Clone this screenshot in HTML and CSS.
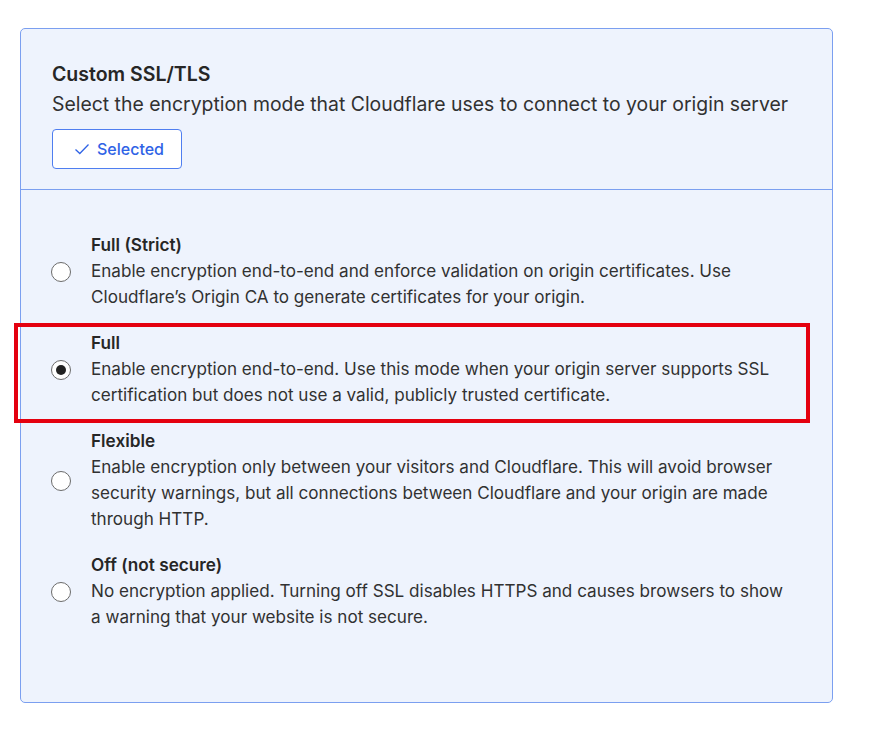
FILE: index.html
```html
<!DOCTYPE html>
<html>
<head>
<meta charset="utf-8">
<link rel="stylesheet" href="styles.css">
</head>
<body>
<div class="card">
  <div class="card-head">
    <h2 class="title">Custom SSL/TLS</h2>
    <p class="subtitle">Select the encryption mode that Cloudflare uses to connect to your origin server</p>
    <button class="btn">
      <svg width="16" height="16" viewBox="0 0 16 16" class="check"><path d="M1.5 8.5 L5.8 12.5 L14.5 3.5" fill="none" stroke="currentColor" stroke-width="1.3"/></svg>
      <span>Selected</span>
    </button>
  </div>
  <div class="options">
    <div class="option">
      <span class="radio"></span>
      <div class="text">
        <div class="opt-title">Full (Strict)</div>
        <div class="opt-desc">Enable encryption end-to-end and enforce validation on origin certificates. Use Cloudflare’s Origin CA to generate certificates for your origin.</div>
      </div>
    </div>
    <div class="option">
      <span class="radio checked"></span>
      <div class="text">
        <div class="opt-title">Full</div>
        <div class="opt-desc">Enable encryption end-to-end. Use this mode when your origin server supports SSL certification but does not use a valid, publicly trusted certificate.</div>
      </div>
      <div class="highlight"></div>
    </div>
    <div class="option">
      <span class="radio"></span>
      <div class="text">
        <div class="opt-title">Flexible</div>
        <div class="opt-desc">Enable encryption only between your visitors and Cloudflare. This will avoid browser security warnings, but all connections between Cloudflare and your origin are made through HTTP.</div>
      </div>
    </div>
    <div class="option">
      <span class="radio"></span>
      <div class="text">
        <div class="opt-title">Off (not secure)</div>
        <div class="opt-desc">No encryption applied. Turning off SSL disables HTTPS and causes browsers to show a warning that your website is not secure.</div>
      </div>
    </div>
  </div>
</div>
</body>
</html>
```
FILE: styles.css
```css
* { box-sizing: border-box; }
html, body { margin: 0; padding: 0; background: #ffffff; }
body {
  font-family: Inter, "Noto Sans", sans-serif;
  color: #313131;
  padding: 28px 0 0 20px;
}
.card {
  width: 813px;
  height: 675px;
  background: #eef3fd;
  border: 1px solid #7b9ff0;
  border-radius: 5px;
}
.card-head {
  padding: 32px 31px 20px;
  border-bottom: 1px solid #7b9ff0;
}
.title {
  margin: 0;
  font-size: 19.5px;
  font-weight: 600;
  line-height: 26px;
  color: #262626;
}
.subtitle {
  margin: 4px 0 12px;
  font-size: 19.4px;
  line-height: 26px;
  font-weight: 400;
}
.btn {
  display: inline-flex;
  align-items: center;
  gap: 7px;
  height: 40px;
  width: 130px;
  padding: 0 0 0 21px;
  background: #ffffff;
  border: 1px solid #4f7ef0;
  border-radius: 4px;
  color: #2f63e6;
  font-family: inherit;
  font-size: 16px;
  font-weight: 500;
}
.check { flex: none; }
.options {
  display: flex;
  flex-direction: column;
  gap: 21px;
  padding: 43px 40px 0 30px;
}
.option {
  position: relative;
  display: flex;
  align-items: center;
  gap: 20px;
}
.radio {
  flex: none;
  width: 20px;
  height: 20px;
  border-radius: 50%;
  border: 1px solid #6b6b6b;
  background: #ffffff;
  position: relative;
}
.radio.checked::after {
  content: "";
  position: absolute;
  left: 4px; top: 4px;
  width: 10px; height: 10px;
  border-radius: 50%;
  background: #222;
}
.text { flex: 1; }
.opt-title {
  font-size: 17.2px;
  font-weight: 600;
  line-height: 24px;
  color: #262626;
}
.opt-desc {
  font-size: 17.1px;
  line-height: 26px;
  margin-top: 1px;
}
.highlight {
  position: absolute;
  left: -37px;
  top: -8px;
  width: 796px;
  height: 100px;
  border: 4px solid #e4000f;
  pointer-events: none;
}
```
